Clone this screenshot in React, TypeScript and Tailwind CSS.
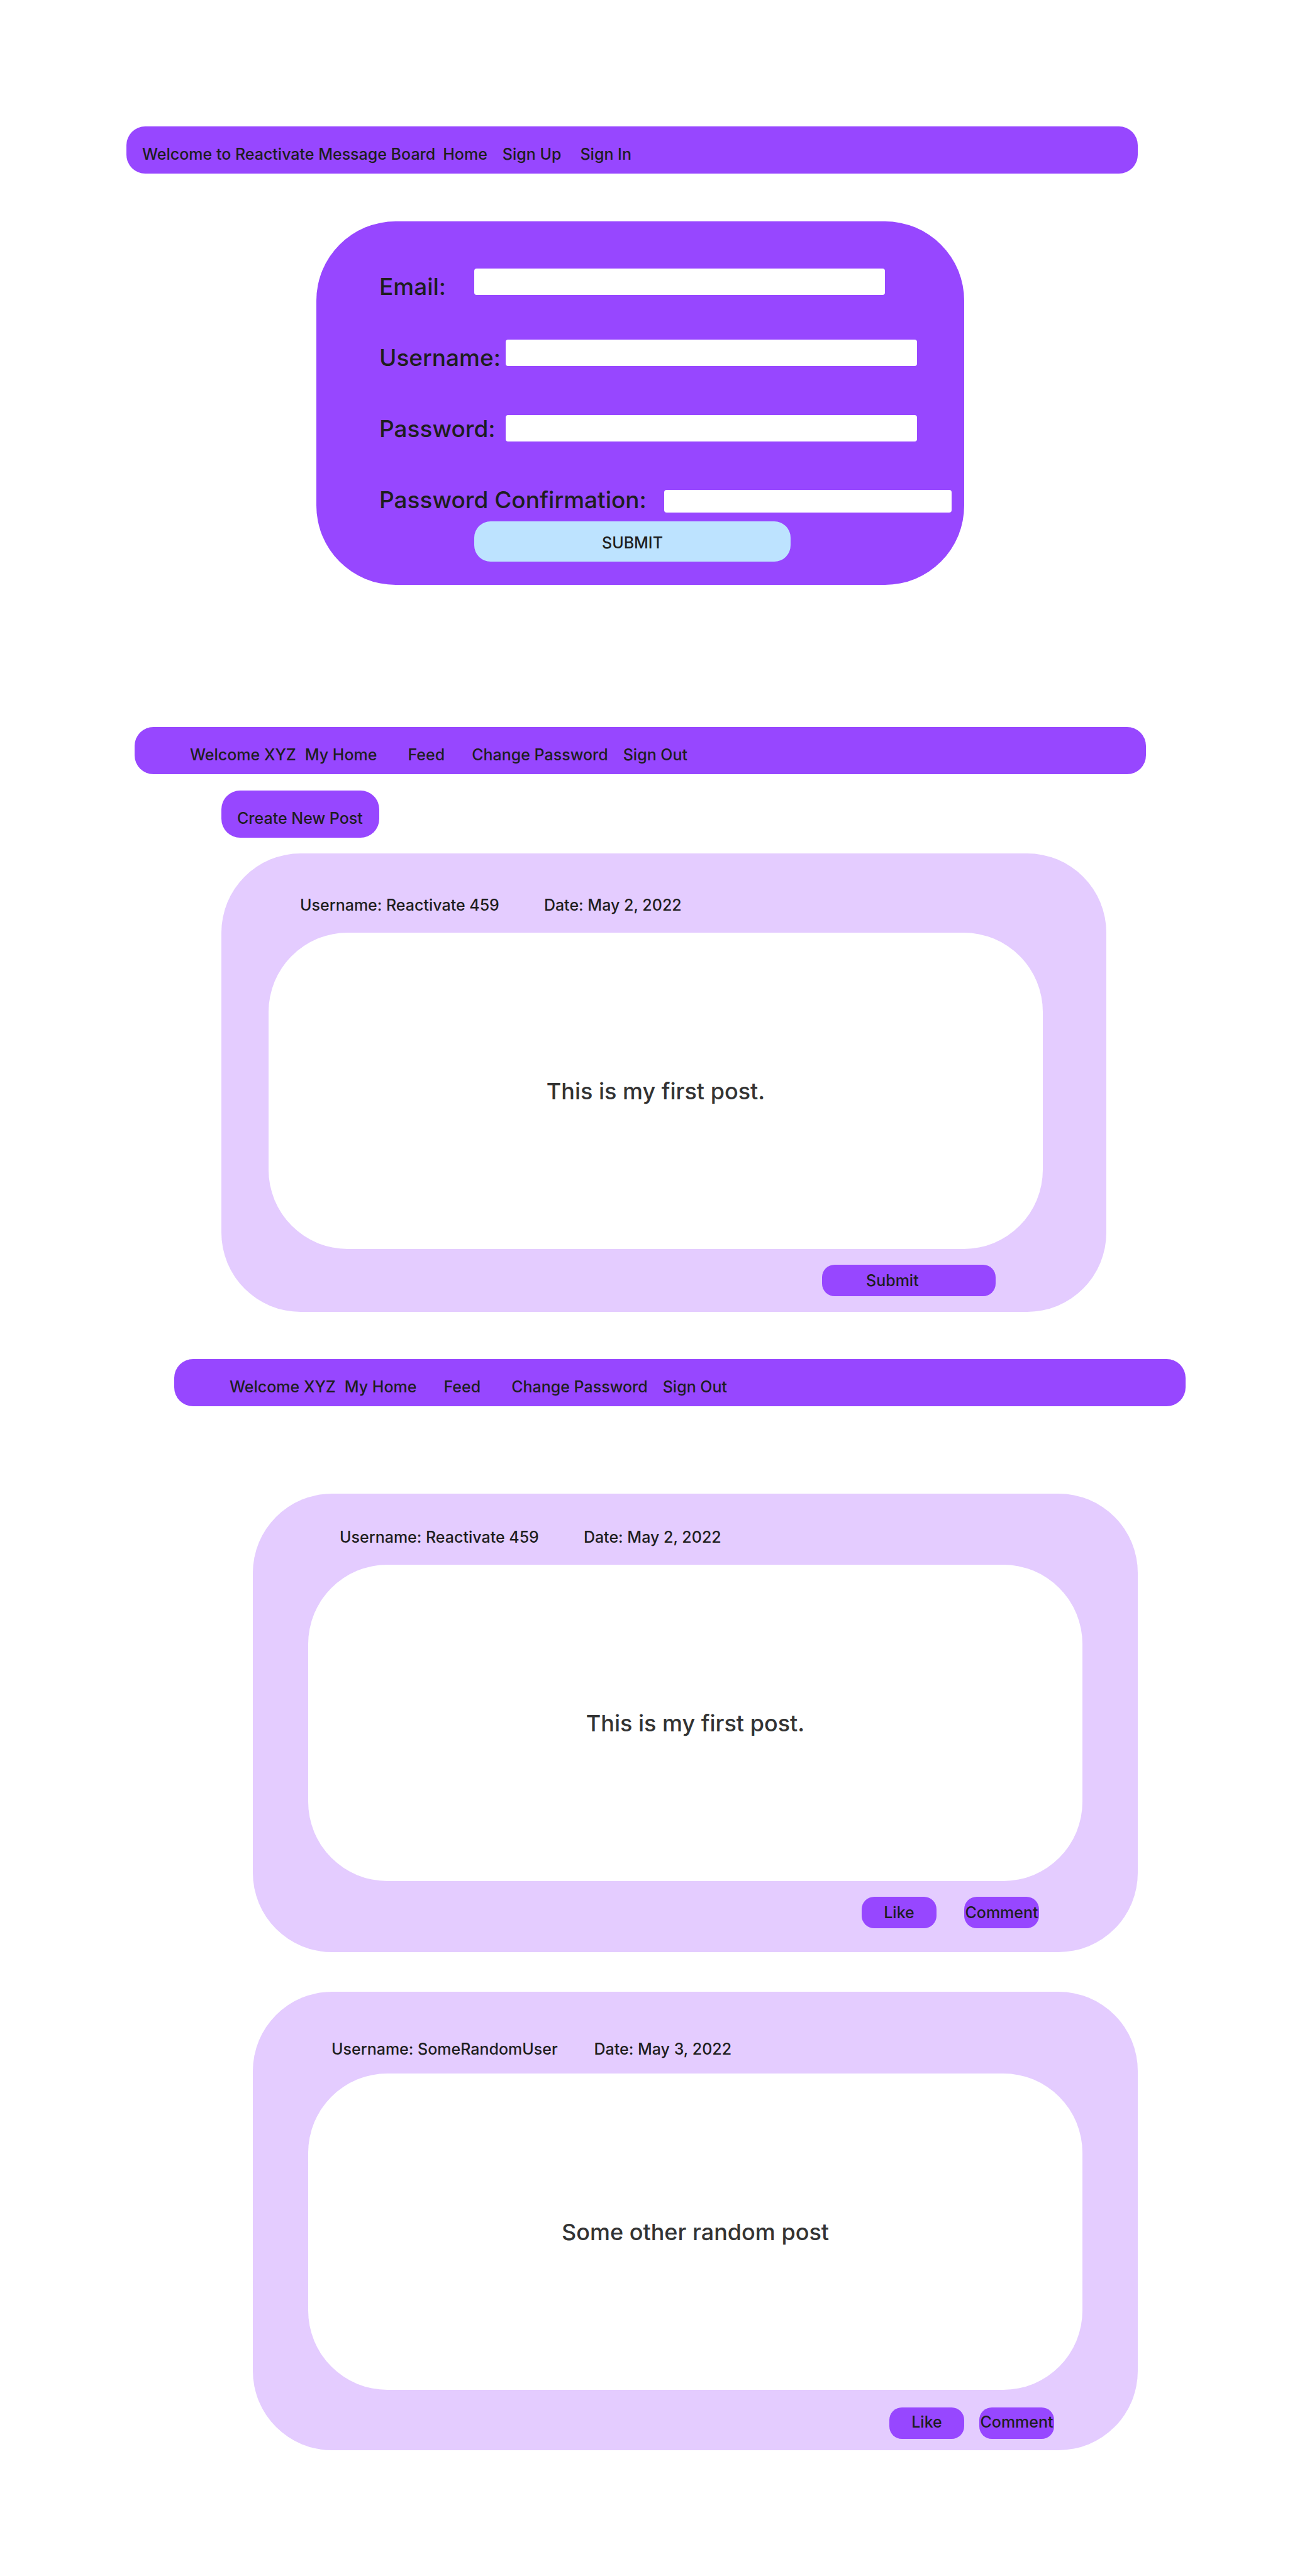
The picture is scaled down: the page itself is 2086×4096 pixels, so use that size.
import type { ReactNode } from "react";

type NavItem = { label: string; gap: string };

function NavBar({ title, items, className }: { title: string; items: NavItem[]; className: string }) {
  return (
    <nav className={`flex rounded-[30px] bg-[#9747ff] pt-[29px] pb-4 whitespace-nowrap ${className}`}>
      <span>{title}</span>
      {items.map((item) => (
        <a key={item.label} href="#" className={item.gap}>
          {item.label}
        </a>
      ))}
    </nav>
  );
}

type FieldProps = {
  id: string;
  label: string;
  type: string;
  labelClass: string;
  inputClass: string;
  rowClass?: string;
};

function Field({ id, label, type, labelClass, inputClass, rowClass = "h-[113px]" }: FieldProps) {
  return (
    <div className={`flex items-start ${rowClass}`}>
      <label htmlFor={id} className={`mt-1.5 shrink-0 text-[37px] leading-[46px] whitespace-nowrap ${labelClass}`}>
        {label}
      </label>
      <input id={id} type={type} className={`min-w-0 flex-1 rounded-[4px] bg-white px-3 text-2xl outline-none ${inputClass}`} />
    </div>
  );
}

type PostProps = {
  user: string;
  date: string;
  text: string;
  className: string;
  headerClass: string;
  bodyClass: string;
  children: ReactNode;
};

function Post({ user, date, text, className, headerClass, bodyClass, children }: PostProps) {
  return (
    <article className={`rounded-[126px] bg-[#e4ccff] ${className}`}>
      <header className={`flex whitespace-nowrap ${headerClass}`}>
        <span>Username: {user}</span>
        <time>Date: {date}</time>
      </header>
      <p
        className={`flex h-[503px] items-center justify-center rounded-[126px] bg-white text-4xl leading-[46px] text-[#333333] ${bodyClass}`}
      >
        {text}
      </p>
      {children}
    </article>
  );
}

function ReactionButtons({ className, buttonClass = "" }: { className: string; buttonClass?: string }) {
  return (
    <div className={`flex justify-end ${className}`}>
      {["Like", "Comment"].map((label) => (
        <button
          key={label}
          type="button"
          className={`flex h-[50px] w-[119px] items-center justify-center rounded-[20px] bg-[#9747ff] ${buttonClass}`}
        >
          {label}
        </button>
      ))}
    </div>
  );
}

export default function App() {
  return (
    <main className="bg-white py-[201px] font-['Inter',sans-serif] text-[25px] leading-[30px] font-medium text-[#1e1e1e]">
      <section>
        <NavBar
          title="Welcome to Reactivate Message Board"
          className="mr-[277px] ml-[201px] pl-[25px]"
          items={[
            { label: "Home", gap: "ml-3" },
            { label: "Sign Up", gap: "ml-6" },
            { label: "Sign In", gap: "ml-[30px]" },
          ]}
        />
        <form className="mt-[76px] mr-[553px] ml-[503px] rounded-[126px] bg-[#9747ff] pt-[75px] pb-[37px] pl-[100px]">
          <Field id="email" label="Email:" type="email" labelClass="w-[151px]" inputClass="mr-[126px] h-[42px]" />
          <Field id="username" label="Username:" type="text" labelClass="w-[201px]" inputClass="mr-[75px] h-[42px]" />
          <Field id="password" label="Password:" type="password" labelClass="w-[201px]" inputClass="mt-[7px] mr-[75px] h-[42px]" />
          <Field
            id="confirmation"
            label="Password Confirmation:"
            type="password"
            labelClass="w-[453px]"
            inputClass="mt-[13px] mr-5 h-9"
            rowClass="h-[63px]"
          />
          <div className="mr-[276px] ml-[151px] flex">
            <button type="submit" className="h-16 flex-1 rounded-[26px] bg-[#bde3ff] pt-1">
              SUBMIT
            </button>
          </div>
        </form>
      </section>

      <section className="mt-[226px]">
        <NavBar
          title="Welcome XYZ"
          className="mr-[264px] ml-[214px] pl-[88px]"
          items={[
            { label: "My Home", gap: "ml-3.5" },
            { label: "Feed", gap: "ml-[49px]" },
            { label: "Change Password", gap: "ml-[43px]" },
            { label: "Sign Out", gap: "ml-6" },
          ]}
        />
        <button
          type="button"
          className="mt-[26px] ml-[352px] block w-[251px] rounded-[30px] bg-[#9747ff] pt-[29px] pb-4 pl-[25px] text-left whitespace-nowrap"
        >
          Create New Post
        </button>
        <Post
          user="Reactivate 459"
          date="May 2, 2022"
          text="This is my first post."
          className="mt-[25px] mr-[327px] ml-[352px] pb-[25px]"
          headerClass="h-[126px] gap-[71px] pt-[67px] pl-[125px]"
          bodyClass="mr-[101px] ml-[75px]"
        >
          <div className="mt-[25px] mr-[176px] flex justify-end">
            <button type="button" className="h-[50px] w-[276px] rounded-[20px] bg-[#9747ff] pl-[70px] text-left">
              Submit
            </button>
          </div>
        </Post>
      </section>

      <section className="mt-[75px]">
        <NavBar
          title="Welcome XYZ"
          className="mr-[201px] ml-[277px] pl-[88px]"
          items={[
            { label: "My Home", gap: "ml-3.5" },
            { label: "Feed", gap: "ml-[43px]" },
            { label: "Change Password", gap: "ml-[49px]" },
            { label: "Sign Out", gap: "ml-6" },
          ]}
        />
        <Post
          user="Reactivate 459"
          date="May 2, 2022"
          text="This is my first post."
          className="mt-[139px] mr-[277px] ml-[402px] pb-[38px]"
          headerClass="h-[113px] gap-[71px] pt-[54px] pl-[138px]"
          bodyClass="mx-[88px]"
        >
          <ReactionButtons className="mt-[25px] mr-[157px] gap-[44px]" />
        </Post>
        <Post
          user="SomeRandomUser"
          date="May 3, 2022"
          text="Some other random post"
          className="mt-[63px] mr-[277px] ml-[402px] pb-[18px]"
          headerClass="h-[130px] gap-[58px] pt-[76px] pl-[125px]"
          bodyClass="mx-[88px]"
        >
          <ReactionButtons className="mt-[28px] mr-[133px] gap-6" buttonClass="pb-1" />
        </Post>
      </section>
    </main>
  );
}
